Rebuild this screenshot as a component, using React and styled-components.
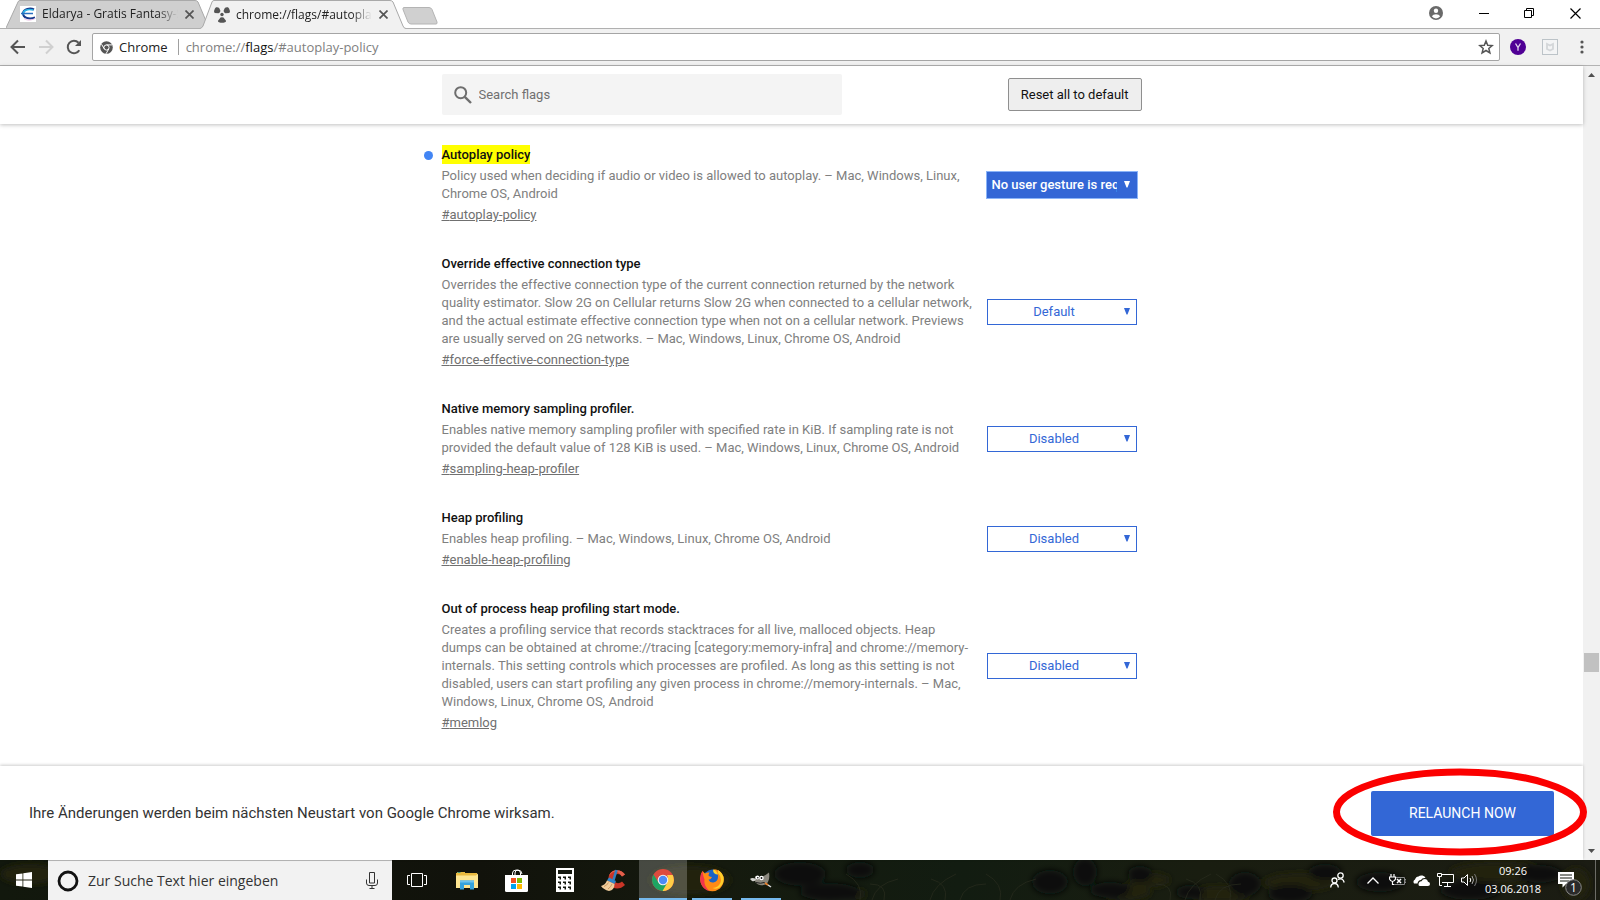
import React from "react";
import styled, { createGlobalStyle, css } from "styled-components";

const GlobalStyle = createGlobalStyle`
  *, *::before, *::after { box-sizing: border-box; }
  body { margin: 0; background: #fff; }
  button, input, select { font: inherit; margin: 0; }
  svg { display: block; }
`;

const uiFont = `"Open Sans", "Noto Sans", sans-serif`;
const pageFont = `Roboto, "Liberation Sans", sans-serif`;

const Desktop = styled.div`
  display: flex;
  flex-direction: column;
  height: 100vh;
  overflow: hidden;
  font-family: ${uiFont};
`;

/* ---------- tab strip ---------- */

const TabStrip = styled.header`
  display: flex;
  flex: none;
  height: 28px;
  padding-left: 6px;
`;

const Tab = styled.div`
  position: relative;
  z-index: ${(p) => (p.$active ? 2 : 1)};
  display: flex;
  align-items: center;
  gap: 6px;
  width: 206px;
  height: ${(p) => (p.$active ? 29 : 28)}px;
  margin-right: -12px;
  padding: 0 18px 0 14px;
  font-size: 12px;
  line-height: 16px;
  color: #222;
`;

const TabShape = styled.svg`
  position: absolute;
  inset: 0;
  z-index: -1;
  width: 100%;
  height: 100%;
`;

const TabTitle = styled.span`
  flex: 1;
  min-width: 0;
  overflow: hidden;
  white-space: nowrap;
  mask-image: linear-gradient(to right, #000 85%, transparent);
`;

const IconButton = styled.button`
  display: flex;
  flex: none;
  align-items: center;
  justify-content: center;
  width: ${(p) => p.$w || 28}px;
  height: ${(p) => p.$h || 28}px;
  padding: 0;
  border: 0;
  background: none;
  color: ${(p) => p.$color || "#555"};
`;

const NewTabButton = styled.button`
  width: 36px;
  height: 18px;
  margin: 7px 0 0 8px;
  padding: 0;
  border: 0;
  background: none;
`;

const WindowControls = styled.div`
  display: flex;
  height: 26px;
  margin-left: auto;
`;

/* ---------- toolbar ---------- */

const Toolbar = styled.nav`
  display: flex;
  flex: none;
  align-items: center;
  height: 38px;
  padding: 0 4px;
  border-top: 1px solid #b0b0b0;
  border-bottom: 1px solid #b3b3b3;
  background: #f1f1f1;
`;

const Omnibox = styled.div`
  display: flex;
  flex: 1;
  align-items: center;
  min-width: 0;
  height: 28px;
  margin: 0 4px;
  padding: 0 0 0 7px;
  border: 1px solid #a5a5a5;
  border-radius: 2px;
  background: #fff;
  font-size: 13px;
  line-height: 18px;
  color: #222;
`;

const SecurityChip = styled.span`
  display: flex;
  align-items: center;
  gap: 6px;
  padding-right: 10px;
  margin-right: 7px;
  border-right: 1px solid #a0a0a0;
  height: 16px;
`;

const Address = styled.div`
  flex: 1;
  min-width: 0;
  white-space: nowrap;
  color: #808080;
  outline: none;

  b { font-weight: 400; color: #111; }
`;

/* ---------- page ---------- */

const Viewport = styled.div`
  position: relative;
  display: flex;
  flex: 1;
  min-height: 0;
`;

const Page = styled.div`
  display: flex;
  flex: 1;
  flex-direction: column;
  min-width: 0;
  font-family: ${pageFont};
  font-size: 13px;
`;

const SearchHeader = styled.div`
  z-index: 1;
  flex: none;
  padding: 8px 0 9px;
  box-shadow: 0 1px 4px rgba(0, 0, 0, 0.25);
  background: #fff;
`;

const Column = styled.div`
  width: 100%;
  max-width: 700px;
  margin: 0 auto;
`;

const SearchRow = styled(Column)`
  display: flex;
  align-items: center;
  justify-content: space-between;
`;

const SearchField = styled.label`
  display: flex;
  align-items: center;
  gap: 7px;
  width: 400px;
  height: 41px;
  padding-left: 12px;
  border-radius: 2px;
  background: #f4f4f4;
`;

const SearchInput = styled.input`
  flex: 1;
  min-width: 0;
  padding: 0;
  border: 0;
  outline: 0;
  background: none;
  color: #222;
  &::placeholder { color: #707070; opacity: 1; }
`;

const ResetButton = styled.button`
  height: 33px;
  padding: 0 12px;
  border: 1px solid #8f8f8f;
  border-radius: 2px;
  background: #eee;
  color: #111;
`;

const FlagList = styled.main`
  flex: 1;
  min-height: 0;
  overflow: hidden;
  padding-top: 21px;
`;

const Flag = styled.section`
  display: flex;
  align-items: center;
  justify-content: space-between;
  margin-bottom: 30px;
  padding-right: 5px;
`;

const FlagText = styled.div`
  position: relative;
  width: 532px;
  line-height: 18px;
`;

const ChangedDot = styled.i`
  position: absolute;
  top: 6px;
  left: -18px;
  width: 9px;
  height: 9px;
  border-radius: 50%;
  background: #4285f4;
`;

const FlagName = styled.h3`
  margin: 0 0 2px;
  font-size: 13px;
  font-weight: 500;
  line-height: 20px;
  color: #111;

  mark { padding: 2px 0; background: #ff0; color: inherit; }
`;

const FlagDescription = styled.p`
  margin: 0;
  color: #808080;
`;

const FlagLink = styled.a`
  display: block;
  width: fit-content;
  margin-top: 3px;
  color: #707070;
  text-decoration: underline;
`;

const SelectBox = styled.div`
  position: relative;
  flex: none;
  width: 150px;
  color: ${(p) => (p.$changed ? "#fff" : "#3367d6")};

  svg { position: absolute; top: 9px; right: 7px; pointer-events: none; }
`;

const Select = styled.select`
  display: block;
  width: 100%;
  height: 26px;
  padding: 0 19px 0 4px;
  border: 1px solid #3367d6;
  border-radius: 0;
  appearance: none;
  outline: 0;
  background: #fff;
  color: inherit;
  text-align: center;
  text-align-last: center;
  ${(p) =>
    p.$changed &&
    css`
      background: #3367d6;
      outline: 1px solid #8ab4f8;
      font-weight: 500;
      text-align-last: left;
    `}
`;

const RestartBar = styled.footer`
  display: flex;
  flex: none;
  z-index: 1;
  align-items: center;
  justify-content: space-between;
  height: 94px;
  padding: 0 29px;
  box-shadow: 0 -1px 3px rgba(0, 0, 0, 0.2);
  background: #fff;
  color: #333;
  font-size: 15px;
`;

const Marked = styled.div`
  position: relative;
`;

const RedRing = styled.svg`
  position: absolute;
  top: -23px;
  left: -39px;
  z-index: 2;
  pointer-events: none;
`;

const RelaunchButton = styled.button`
  display: block;
  width: 183px;
  height: 45px;
  border: 0;
  border-radius: 2px;
  background: #3367d6;
  color: #fff;
  font-size: 14px;
`;

const Scrollbar = styled.div`
  display: flex;
  flex: none;
  flex-direction: column;
  width: 17px;
  background: #f1f1f1;
`;

const ScrollTrack = styled.div`
  display: flex;
  flex: 1;
  flex-direction: column;
  align-items: flex-end;

  &::before { content: ""; flex: 572; }
  &::after { content: ""; flex: 170; }
`;

const ScrollThumb = styled.div`
  width: 15px;
  margin-right: 1px;
  height: 19px;
  background: #c1c1c1;
`;

/* ---------- taskbar ---------- */

const Taskbar = styled.footer`
  position: relative;
  z-index: 0;
  display: flex;
  flex: none;
  height: 40px;
  background: #11160d;
  color: #fff;
`;

const Wallpaper = styled.svg`
  position: absolute;
  inset: 0;
  z-index: -1;
  width: 100%;
  height: 100%;
`;

const TaskSearch = styled.label`
  display: flex;
  align-items: center;
  gap: 9px;
  width: 344px;
  padding: 0 14px 0 9px;
  border-top: 1px solid #b8b8b8;
  background: #f2f2f2;
  color: #222;
`;

const TaskSearchInput = styled.input`
  flex: 1;
  min-width: 0;
  padding: 0;
  border: 0;
  outline: 0;
  background: none;
  font-size: 14px;
  &::placeholder { color: #333; opacity: 1; }
`;

const TaskButton = styled.button`
  display: flex;
  flex: none;
  align-items: center;
  justify-content: center;
  width: ${(p) => p.$w || 48}px;
  height: 40px;
  padding: 0;
  border: 0;
  background: ${(p) => (p.$active ? "rgba(255, 255, 255, 0.22)" : "none")};
  color: #fff;
  ${(p) =>
    p.$running &&
    css`
      background-image: linear-gradient(#76b9ed, #76b9ed);
      background-repeat: no-repeat;
      background-position: center bottom;
      background-size: ${p.$active ? "100%" : "40px"} 2px;
    `}
`;

const AppButtons = styled.div`
  display: flex;
  gap: 1px;
`;

const Tray = styled.div`
  display: flex;
  margin-left: auto;
`;

const Clock = styled.time`
  display: flex;
  flex-direction: column;
  justify-content: center;
  width: 64px;
  font-size: 11px;
  line-height: 18px;
  text-align: center;
  white-space: nowrap;
`;

const ShowDesktop = styled.button`
  width: 5px;
  padding: 0;
  border: 0;
  border-left: 1px solid #6c6c66;
  background: none;
`;

/* ---------- drawings ---------- */

const TabBackground = ({ active }) => (
  <TabShape viewBox={active ? "0 0 206 29" : "0 0 206 28"} preserveAspectRatio="none" aria-hidden="true">
    <path
      d={active ? "M0 29 L0 28.5 Q2 28 3 26 L12 2 Q12.500 .5 14 .5 L190 .5 Q192 .5 193 2 L203 26 Q204 28.500 206 28.500 L206 29 Z" : "M0 28 L12 2 Q12.500 .5 14 .5 L189 .5 Q191 .5 192 2 L203 28 Z"}
      fill={active ? "#f1f1f1" : "#cfcfcf"}
    />
    <path
      d={active ? "M0 28.500 Q2 28 3 26 L12 2 Q12.500 .5 14 .5 L190 .5 Q192 .5 193 2 L203 26 Q204 28.500 206 28.500" : "M0 28 L12 2 Q12.500 .5 14 .5 L189 .5 Q191 .5 192 2 L203 28"}
      fill="none"
      stroke="#a9a9a9"
    />
  </TabShape>
);

const EldaryaIcon = () => (
  <svg width="16" height="16" viewBox="0 0 16 16">
    <rect width="16" height="16" fill="#fff" />
    <path d="M14 3.500C10 1.500 4 3 3 7c0 5 6 6.500 12 4.500" fill="none" stroke="#173a8c" strokeWidth="2" />
    <path d="M13.500 4C8 2.500 3 4 3 8.500" fill="none" stroke="#2ab4e6" strokeWidth="1.500" />
    <path d="M1 7.500h12" stroke="#2a6fc0" strokeWidth="1.500" />
    <path d="M4 12.500c3 2 7 2 11 0" fill="none" stroke="#e9b8e0" />
  </svg>
);

const RadiationIcon = () => (
  <svg width="16" height="16" viewBox="0 0 16 16" fill="#555">
    <circle cx="8" cy="7.500" r="1.700" />
    <path d="M2 .3Q4.500 0 5.300 1.200L6.500 4Q5.500 6.200 4.500 6.200L.8 6Q-.3 5.200.2 3.500 .8 1.200 2 .3ZM14 .3Q11.500 0 10.700 1.200L9.500 4q1 2.200 2 2.200L15.200 6q1.100-.8.600-2.500Q15.200 1.200 14 .3ZM6.500 10.500q1.500-.6 3 0l2.500 3.200q.3 1-1 1.500-3 1.200-6 0-1.300-.5-1-1.500Z" />
  </svg>
);

const CloseIcon = ({ size = 9, w = 1.7 }) => (
  <svg width={size} height={size} viewBox={`0 0 ${size} ${size}`} stroke="currentColor" strokeWidth={w}>
    <path d={`M.5 .5 L${size - 0.5} ${size - 0.5} M${size - 0.5} .5 L.5 ${size - 0.5}`} />
  </svg>
);

const NewTabShape = () => (
  <svg width="36" height="18" viewBox="0 0 36 18">
    <path d="M2 .5h25q2 0 3 2l5 12.500q.5 2-1 2H9q-2 0-3-2L1 2.500Q.500 .5 2 .5Z" fill="#d0d0d0" stroke="#b4b4b4" />
  </svg>
);

const ArrowIcon = ({ flip }) => (
  <svg width="16" height="16" viewBox="0 0 16 16" fill="none" stroke="currentColor" strokeWidth="2">
    <path d={flip ? "M1 8h13M8 1.500 14.500 8 8 14.500" : "M15 8H2M8 1.500 1.500 8 8 14.500"} />
  </svg>
);

const ReloadIcon = () => (
  <svg width="16" height="16" viewBox="0 0 16 16">
    <path d="M13.300 11.200A6.200 6.200 0 1 1 12.500 3.800" fill="none" stroke="#555" strokeWidth="2" />
    <path d="M15 1v6H9Z" fill="#555" />
  </svg>
);

const ChromeMono = () => (
  <svg width="13" height="13" viewBox="0 0 13 13">
    <circle cx="6.500" cy="6.500" r="6.300" fill="#555" />
    <circle cx="6.500" cy="6.500" r="2.600" fill="#555" stroke="#fff" strokeWidth="1" />
    <path d="M6.500 3.900H12M4.300 7.900 1.500 3.200M8.800 7.900 6 12.800" stroke="#fff" strokeWidth="1" />
  </svg>
);

const UserIcon = () => (
  <svg width="14" height="14" viewBox="0 0 14 14">
    <circle cx="7" cy="7" r="7" fill="#6a6a6a" />
    <circle cx="7" cy="4.700" r="2.200" fill="#fff" />
    <path d="M2.800 10.300Q4 8.300 7 8.300t4.200 2Q9.700 12.400 7 12.400t-4.200-2.100Z" fill="#fff" />
  </svg>
);

const StarIcon = () => (
  <svg width="16" height="16" viewBox="0 0 16 16" fill="none" stroke="#555" strokeWidth="1.500">
    <path d="M8 2 9.700 6.200l4.500.4-3.400 2.900 1.100 4.400L8 11.500l-3.900 2.400 1.100-4.400L1.800 6.600l4.500-.4Z" />
  </svg>
);

const YahooIcon = () => (
  <svg width="16" height="16" viewBox="0 0 16 16">
    <circle cx="8" cy="8" r="8" fill="#500095" />
    <path d="M5.500 4.500 8 8.500l2.500-4M8 8.500v3.300" fill="none" stroke="#e3d5ef" strokeWidth="1.300" />
  </svg>
);

const ShieldIcon = () => (
  <svg width="16" height="16" viewBox="0 0 16 16" fill="none">
    <rect x=".5" y=".5" width="15" height="15" fill="#f3f4f5" stroke="#bcc3c8" />
    <path d="M5 5v5l3 1.500 3-1.500V5L8 6.500Z" stroke="#d3d6d9" strokeWidth="1.800" />
  </svg>
);

const DotsIcon = () => (
  <svg width="4" height="14" viewBox="0 0 4 14" fill="#555">
    <circle cx="2" cy="2" r="1.600" /><circle cx="2" cy="7" r="1.600" /><circle cx="2" cy="12" r="1.600" />
  </svg>
);

const SearchIcon = () => (
  <svg width="18" height="18" viewBox="0 0 18 18" fill="none" stroke="#6e6e6e" strokeWidth="2">
    <circle cx="6.700" cy="6.700" r="5.500" /><path d="m10.800 10.800 6.200 6.200" strokeWidth="2.400" />
  </svg>
);

const Caret = () => (
  <svg width="6" height="7" viewBox="0 0 6 7" fill="currentColor"><path d="M0 0h6L3.500 6.500h-1Z" /></svg>
);

const ScrollArrow = ({ up }) => (
  <svg width="7" height="4" viewBox="0 0 7 4" fill="#505050"><path d={up ? "M0 4 3.500 0 7 4Z" : "M0 0h7L3.500 4Z"} /></svg>
);

const WindowsLogo = () => (
  <svg width="16" height="16" viewBox="0 0 16 16" fill="#fff">
    <path d="M0 2.300 6.500 1.400v6.200H0ZM7.300 1.300 16 0v7.600H7.300ZM0 8.400h6.500v6.200L0 13.700ZM7.300 8.400H16V16l-8.700-1.300Z" />
  </svg>
);

const CortanaRing = () => (
  <svg width="22" height="22" viewBox="0 0 22 22">
    <circle cx="11" cy="11" r="9" fill="none" stroke="#111" strokeWidth="2.800" />
  </svg>
);

const MicIcon = () => (
  <svg width="12" height="17" viewBox="0 0 12 17" fill="none" stroke="#333">
    <path d="M3.500.5h5v10.500h-5ZM.5 7.500V11q0 2.500 2.500 2.500h6q2.500 0 2.500-2.500V7.500M6 13.500v3M3.500 16.500h5" />
  </svg>
);

const TaskViewIcon = () => (
  <svg width="20" height="14" viewBox="0 0 20 14" fill="none" stroke="#fff">
    <path d="M4.500.5h11v13h-11ZM3 2.500H.5v9H3M17 2.500h2.500v9H17" />
  </svg>
);

const ExplorerIcon = () => (
  <svg width="22" height="19" viewBox="0 0 22 19">
    <path d="M0 2h1V1h8v1h12v14H0Z" fill="#e9b93f" />
    <path d="M0 4.500h20l2-2V17H0Z" fill="#fde591" />
    <path d="M1.500 1.500h3" stroke="#4a9a7a" />
    <path d="M4 18.500v-9h14v9h-4v-4.500H8v4.500Z" fill="#35a3dc" />
    <path d="M4 9.500h14v2H4Z" fill="#6cc3ee" />
  </svg>
);

const StoreIcon = () => (
  <svg width="23" height="23" viewBox="0 0 23 23">
    <path d="M7.500 6V4q0-3 4-3t4 3v2M10 6V4q0-3 3-3 3.500 0 4 4" fill="none" stroke="#fff" />
    <path d="M0 6h23v15.500q0 1.500-1.500 1.500h-20Q0 23 0 21.500Z" fill="#fff" />
    <path d="M6 9h5v5H6Z" fill="#f25022" /><path d="M12 9h5v5h-5Z" fill="#7fba00" />
    <path d="M6 15h5v5H6Z" fill="#00a4ef" /><path d="M12 15h5v5h-5Z" fill="#ffb900" />
  </svg>
);

const CalculatorIcon = () => (
  <svg width="18" height="24" viewBox="0 0 18 24">
    <path d="M0 0h18v24H0Z" fill="#fff" /><path d="M2 2h14v4H2Z" fill="#14180f" />
    {[9, 14, 19].map((y) => [2, 7, 12].map((x) => <path key={`${x}-${y}`} d={`M${x} ${y - 0.5}h3v3h-1.500v-1.500h-1.500Z`} fill="#14180f" />))}
  </svg>
);

const CCleanerIcon = () => (
  <svg width="26" height="24" viewBox="0 0 26 24">
    <path d="M24 6.500C20 .5 9 .5 7.500 9.500 6 20 17 24 24 17l-3-3.500c-4 3.500-8.500 1-8.500-3 0-5 6-6 8.500-2Z" fill="#c93527" />
    <path d="M24 6.500C20 .5 10 .5 8 8c4-6 9-5.500 13 .5Z" fill="#e2604c" />
    <path d="M15.500 2 12.500 12" stroke="#2f7fc1" strokeWidth="2.600" />
    <path d="M8 9.500 15 13l-1.500 3L6 12.500Z" fill="#2f86c9" />
    <path d="M6 12.500 13.500 16q0 6-5.500 7Q2.500 21.500 0 18q4-1 6-5.500Z" fill="#f0cd9c" />
    <path d="M3 18.500q3-1 4.500-4M7 21q3-2 4-5" stroke="#cc9a60" fill="none" />
  </svg>
);

const ChromeIcon = () => (
  <svg width="22" height="22" viewBox="0 0 22 22">
    <circle cx="11" cy="11" r="11" fill="#dd4b3e" />
    <path d="M1.500 5.500A11 11 0 0 0 11 22l4.500-8.500H6.500Z" fill="#1da462" />
    <path d="M20.700 6A11 11 0 0 1 10.500 22l5-8.500q1.500-4-.5-7.500Z" fill="#ffcd46" />
    <circle cx="11" cy="11" r="5.300" fill="#f3f3f3" /><circle cx="11" cy="11" r="4.200" fill="#4c8bf5" />
  </svg>
);

const FirefoxIcon = () => (
  <svg width="24" height="24" viewBox="0 0 24 24">
    <circle cx="12.500" cy="11" r="9.500" fill="#1b63c6" />
    <path d="M13 1.500q5 .5 8.500 6-2.500-1-3.500-1Q13 6.500 13 1.500Z" fill="#ffd42d" />
    <path d="M2.500 3 5 5.500q2-1.500 4.500-1L8.500 7q0 1.500 3.500 2-1 2.500-3.500 2.700Q10 15 13.500 14.500q5-1 4.500-7-.5-4-4.500-6.500 7.500.5 10 7.500 1.500 7-3.500 12-6 4.500-13 1.500Q.5 18.500.3 12-.2 6.500 2.500 3Z" fill="#ff8a16" />
    <path d="M2.500 3Q-.5 8 .5 14q2 7.500 9 9.300Q3.500 18 4.500 11.500 3 8 2.500 3Z" fill="#f2344c" />
    <path d="M18 5q4 4 2.500 9.500-2 5-8 5.500 7 2.500 10.500-5 2.500-8-5-13Z" fill="#ffcf2b" />
  </svg>
);

const GimpIcon = () => (
  <svg width="22" height="16" viewBox="0 0 22 16">
    <path d="M5 4q3 2 6 1 4-1 8-4.500 1 6-1 9.500-3 4-8 3-4-1-5-4Z" fill="#8b887e" />
    <path d="M0 7q2-2 6 0-1 3-4 2Z" fill="#d4d4d0" />
    <circle cx="7.500" cy="5.500" r="2" fill="#fff" /><circle cx="11.500" cy="6" r="2.200" fill="#fff" />
    <circle cx="7.800" cy="5.700" r=".8" fill="#111" /><circle cx="11.500" cy="6" r=".9" fill="#111" />
    <path d="M6 10.500q5 1.500 8 0l5 3.500" fill="none" stroke="#222" />
    <path d="m15 11 3 2" stroke="#e6812f" strokeWidth="2" /><path d="m18 13 3 2" stroke="#ddd" strokeWidth="1.500" />
  </svg>
);

const PeopleIcon = () => (
  <svg width="15" height="16" viewBox="0 0 15 16" fill="none" stroke="#fff" strokeWidth="1.300">
    <circle cx="10.500" cy="3.500" r="2.700" /><circle cx="4.500" cy="8.500" r="2.500" />
    <path d="M.7 15.500q.3-4 3.800-4t3.800 4M8 7.500q5-2 6.200 3" />
  </svg>
);

const ChevronUp = () => (
  <svg width="12" height="7" viewBox="0 0 12 7" fill="none" stroke="#fff" strokeWidth="1.300"><path d="m.5 6.500 5.500-5.500 5.500 5.500" /></svg>
);

const BatteryIcon = () => (
  <svg width="17" height="13" viewBox="0 0 17 13" fill="none" stroke="#fff">
    <path d="M2 0v2.500M5 0v2.500M.5 3h6v2q-1 2.500-3 2.500T.5 5ZM3.500 7.500v3h2" strokeWidth="1.200" />
    <path d="M7 3.500h8.500v7H6M16 5.500h1v3h-1" stroke="#888" /><path d="m8 5 4 4m0-4-4 4" strokeWidth="1.500" />
  </svg>
);

const CloudIcon = () => (
  <svg width="17" height="11" viewBox="0 0 17 11" fill="#fff">
    <path d="M1 8.500Q-.5 6 2 4.500 3 1.500 5.500 1.500 7 0 9.500.5 12 1 12.500 3 9 2.500 8 5 5 5 4.500 8.500Z" />
    <path d="M5.500 9.500q0-3 3-3.300Q9.500 4 12 4t3 2.700q2 .3 2 2.300t-2 2H7q-1.500 0-1.500-1.500Z" />
  </svg>
);

const NetworkIcon = () => (
  <svg width="17" height="14" viewBox="0 0 17 14" fill="none" stroke="#fff">
    <path d="M5 1.500h11.500v8H5M10.500 9.500v3.500M7 13.500h7M.5.5h4v3h-4ZM2.500 3.500v9h2.500" />
  </svg>
);

const VolumeIcon = () => (
  <svg width="17" height="14" viewBox="0 0 17 14" fill="none" stroke="#fff">
    <path d="M.5 5h2.500l3.500-3.500v11L3 9H.500ZM9 5q1.500 2 0 4" /><path d="M11 3q3 4 0 8" stroke="#aaa" /><path d="M13.500 1q4 6 0 12" stroke="#777" />
  </svg>
);

const NotificationIcon = () => (
  <svg width="24" height="32" viewBox="1 -7 24 32">
    <path d="M1 1h16v12H9l-3.500 3.500V13H1Z" fill="#fff" />
    <path d="M3 4h12M3 7h12M3 10h9" stroke="#11160d" />
    <circle cx="16.500" cy="16.500" r="7.800" fill="#2a2a2a" stroke="#8a8a8a" />
    <text x="16.500" y="21" fill="#fff" fontSize="12" fontFamily="Open Sans, sans-serif" textAnchor="middle">1</text>
  </svg>
);

const leafPatches = [
  [800, 14, 26, 12], [830, 32, 30, 9], [860, 10, 14, 8], [1050, 22, 18, 12], [1085, 12, 12, 14], [1110, 30, 20, 8],
  [1140, 14, 12, 8], [1190, 32, 14, 7], [1245, 24, 16, 12], [1290, 34, 22, 9], [1325, 12, 16, 8],
  [1380, 22, 24, 10], [1470, 30, 30, 10], [1540, 14, 22, 9],
];
const mossPatches = [[30, 14, 30, 10], [690, 20, 40, 14], [850, 34, 16, 6], [1125, 32, 26, 8], [1150, 20, 20, 7], [1220, 34, 30, 8], [1300, 22, 36, 9], [1500, 12, 50, 10], [1576, 24, 14, 16]];
const grassBlades = [860, 872, 884, 930, 945, 960, 1000, 1010, 1170, 1185, 1200, 1215, 1230];

const TaskbarScene = () => (
  <Wallpaper viewBox="0 0 1600 40" preserveAspectRatio="none" aria-hidden="true">
    <defs>
      <linearGradient id="ground">
        <stop offset="0" stopColor="#12180d" /><stop offset=".3" stopColor="#11120b" />
        <stop offset=".45" stopColor="#151a0e" /><stop offset=".6" stopColor="#121c11" />
        <stop offset=".75" stopColor="#191d10" /><stop offset="1" stopColor="#1b1c13" />
      </linearGradient>
      <filter id="soft"><feGaussianBlur stdDeviation="3" /></filter>
    </defs>
    <rect width="1600" height="40" fill="url(#ground)" />
    <g filter="url(#soft)">
      {mossPatches.map(([x, y, rx, ry]) => <ellipse key={x} cx={x} cy={y} rx={rx} ry={ry} fill="#222310" />)}
      {leafPatches.map(([x, y, rx, ry]) => <ellipse key={x} cx={x} cy={y} rx={rx} ry={ry} fill="#070d0c" />)}
    </g>
    <g fill="none" stroke="#2a2d1f" opacity=".7">
      {grassBlades.map((x, i) => <path key={x} d={`M${x} 40Q${x + 4} 24 ${x + (i % 2 ? 26 : -14)} ${14 + (i % 3) * 5}`} />)}
    </g>
  </Wallpaper>
);

/* ---------- content ---------- */

const flags = [
  { id: "autoplay-policy", name: "Autoplay policy", text: "Policy used when deciding if audio or video is allowed to autoplay. – Mac, Windows, Linux, Chrome OS, Android", value: "No user gesture is required", changed: true },
  { id: "force-effective-connection-type", name: "Override effective connection type", text: "Overrides the effective connection type of the current connection returned by the network quality estimator. Slow 2G on Cellular returns Slow 2G when connected to a cellular network, and the actual estimate effective connection type when not on a cellular network. Previews are usually served on 2G networks. – Mac, Windows, Linux, Chrome OS, Android", value: "Default" },
  { id: "sampling-heap-profiler", name: "Native memory sampling profiler.", text: "Enables native memory sampling profiler with specified rate in KiB. If sampling rate is not provided the default value of 128 KiB is used. – Mac, Windows, Linux, Chrome OS, Android", value: "Disabled" },
  { id: "enable-heap-profiling", name: "Heap profiling", text: "Enables heap profiling. – Mac, Windows, Linux, Chrome OS, Android", value: "Disabled" },
  { id: "memlog", name: "Out of process heap profiling start mode.", text: "Creates a profiling service that records stacktraces for all live, malloced objects. Heap dumps can be obtained at chrome://tracing [category:memory-infra] and chrome://memory-internals. This setting controls which processes are profiled. As long as this setting is not disabled, users can start profiling any given process in chrome://memory-internals. – Mac, Windows, Linux, Chrome OS, Android", value: "Disabled" },
  { id: "memlog-keep-small-allocations", name: "Emit small allocations in memlog heap dumps.", text: "", value: "Disabled" },
];

const FlagEntry = ({ flag }) => (
  <Flag>
    <FlagText>
      {flag.changed && <ChangedDot />}
      <FlagName id={`${flag.id}-name`}>{flag.changed ? <mark>{flag.name}</mark> : flag.name}</FlagName>
      <FlagDescription>{flag.text}</FlagDescription>
      <FlagLink href={`#${flag.id}`}>#{flag.id}</FlagLink>
    </FlagText>
    <SelectBox $changed={flag.changed}>
      <Select $changed={flag.changed} aria-labelledby={`${flag.id}-name`} defaultValue={flag.value}>
        <option>{flag.value}</option>
      </Select>
      <Caret />
    </SelectBox>
  </Flag>
);

export default function App() {
  return (
    <Desktop>
      <GlobalStyle />
      <TabStrip>
        <Tab>
          <TabBackground />
          <EldaryaIcon />
          <TabTitle>Eldarya - Gratis Fantasy-Spiel</TabTitle>
          <IconButton $w={10} $h={16} aria-label="Tab schließen"><CloseIcon /></IconButton>
        </Tab>
        <Tab $active>
          <TabBackground active />
          <RadiationIcon />
          <TabTitle>chrome://flags/#autoplay-policy</TabTitle>
          <IconButton $w={10} $h={16} aria-label="Tab schließen"><CloseIcon /></IconButton>
        </Tab>
        <NewTabButton aria-label="Neuer Tab"><NewTabShape /></NewTabButton>
        <WindowControls>
          <IconButton $w={50} $h={26} aria-label="Profil"><UserIcon /></IconButton>
          <IconButton $w={46} $h={26} $color="#000" aria-label="Minimieren"><svg width="10" height="1"><path d="M0 0h10v1H0Z" /></svg></IconButton>
          <IconButton $w={44} $h={26} $color="#000" aria-label="Verkleinern">
            <svg width="10" height="10" viewBox="0 0 10 10" fill="none" stroke="#000"><path d="M.5 2.500h7v7h-7ZM2.500 2.500v-2h7v7h-2" /></svg>
          </IconButton>
          <IconButton $w={49} $h={26} $color="#000" aria-label="Schließen"><CloseIcon size={11} w={1.2} /></IconButton>
        </WindowControls>
      </TabStrip>

      <Toolbar>
        <IconButton aria-label="Zurück"><ArrowIcon /></IconButton>
        <IconButton $color="#d0d0d0" aria-label="Vorwärts"><ArrowIcon flip /></IconButton>
        <IconButton aria-label="Neu laden"><ReloadIcon /></IconButton>
        <Omnibox>
          <SecurityChip><ChromeMono />Chrome</SecurityChip>
          <Address role="textbox" aria-label="Adresse" contentEditable suppressContentEditableWarning spellCheck={false}>
            chrome://<b>flags</b>/#autoplay-policy
          </Address>
          <IconButton $w={26} $h={26} aria-label="Lesezeichen"><StarIcon /></IconButton>
        </Omnibox>
        <IconButton aria-label="Yahoo"><YahooIcon /></IconButton>
        <IconButton $w={36} aria-label="WebAdvisor"><ShieldIcon /></IconButton>
        <IconButton aria-label="Menü"><DotsIcon /></IconButton>
      </Toolbar>

      <Viewport>
        <Page>
          <SearchHeader>
            <SearchRow>
              <SearchField>
                <SearchIcon />
                <SearchInput type="text" placeholder="Search flags" aria-label="Search flags" />
              </SearchField>
              <ResetButton>Reset all to default</ResetButton>
            </SearchRow>
          </SearchHeader>
          <FlagList>
            <Column>{flags.map((flag) => <FlagEntry key={flag.id} flag={flag} />)}</Column>
          </FlagList>
          <RestartBar>
            <span>Ihre Änderungen werden beim nächsten Neustart von Google Chrome wirksam.</span>
            <Marked>
              <RelaunchButton>RELAUNCH NOW</RelaunchButton>
              <RedRing width="256" height="88" viewBox="0 0 256 88" aria-hidden="true">
                <ellipse cx="128" cy="44" rx="123.500" ry="40" fill="none" stroke="#fb0000" strokeWidth="7" />
              </RedRing>
            </Marked>
          </RestartBar>
        </Page>
        <Scrollbar aria-hidden="true">
          <IconButton as="span" $w={17} $h={17}><ScrollArrow up /></IconButton>
          <ScrollTrack><ScrollThumb /></ScrollTrack>
          <IconButton as="span" $w={17} $h={19}><ScrollArrow /></IconButton>
        </Scrollbar>
      </Viewport>

      <Taskbar>
        <TaskbarScene />
        <TaskButton aria-label="Start"><WindowsLogo /></TaskButton>
        <TaskSearch>
          <CortanaRing />
          <TaskSearchInput type="text" placeholder="Zur Suche Text hier eingeben" aria-label="Suche" />
          <MicIcon />
        </TaskSearch>
        <AppButtons>
          <TaskButton $w={50} aria-label="Taskansicht"><TaskViewIcon /></TaskButton>
          <TaskButton aria-label="Explorer"><ExplorerIcon /></TaskButton>
          <TaskButton aria-label="Store"><StoreIcon /></TaskButton>
          <TaskButton aria-label="Rechner"><CalculatorIcon /></TaskButton>
          <TaskButton aria-label="CCleaner"><CCleanerIcon /></TaskButton>
          <TaskButton $active $running aria-label="Chrome"><ChromeIcon /></TaskButton>
          <TaskButton $running aria-label="Firefox"><FirefoxIcon /></TaskButton>
          <TaskButton $running aria-label="GIMP"><GimpIcon /></TaskButton>
        </AppButtons>
        <Tray>
          <TaskButton aria-label="Kontakte"><PeopleIcon /></TaskButton>
          <TaskButton $w={24} aria-label="Weitere Symbole"><ChevronUp /></TaskButton>
          <TaskButton $w={24} aria-label="Akku"><BatteryIcon /></TaskButton>
          <TaskButton $w={24} aria-label="OneDrive"><CloudIcon /></TaskButton>
          <TaskButton $w={24} aria-label="Netzwerk"><NetworkIcon /></TaskButton>
          <TaskButton $w={24} aria-label="Lautstärke"><VolumeIcon /></TaskButton>
          <Clock><span>09:26</span><span>03.06.2018</span></Clock>
          <TaskButton $w={50} aria-label="Benachrichtigungen"><NotificationIcon /></TaskButton>
          <ShowDesktop aria-label="Desktop anzeigen" />
        </Tray>
      </Taskbar>
    </Desktop>
  );
}
